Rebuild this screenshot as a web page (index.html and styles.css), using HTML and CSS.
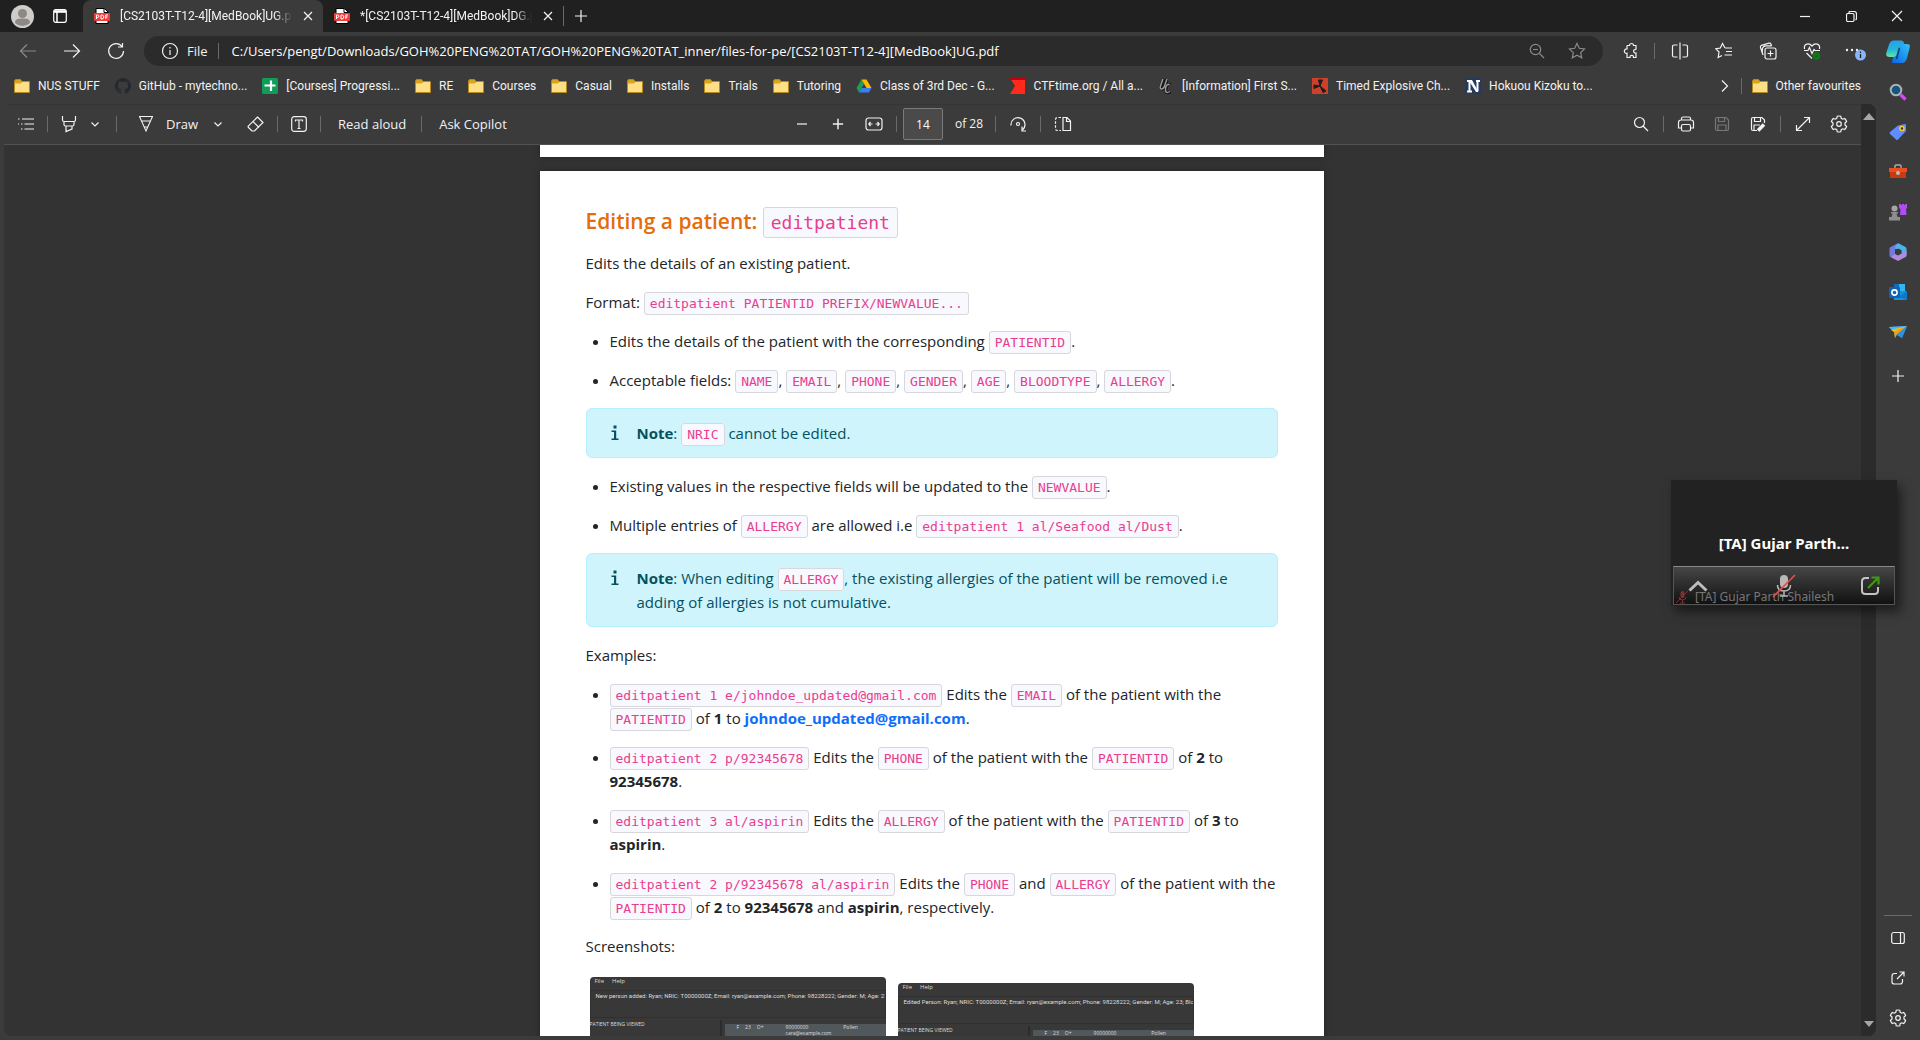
FILE: index.html
```
<!DOCTYPE html>
<html lang="en">
<head>
<meta charset="utf-8">
<title>[CS2103T-T12-4][MedBook]UG.pdf</title>
<link rel="stylesheet" href="styles.css">
</head>
<body>
<svg class="defs" aria-hidden="true">
  <symbol id="folder" viewBox="0 0 16 16"><path d="M.5 3V14.500h15V3.500H8L6.500 1.500H1.500Z" fill="#d9a520" stroke="#b58a1a"/><path d="M1 5.500h5.500L8.500 4h6.500v10H1Z" fill="#ffdf86"/></symbol>
  <symbol id="pdf" viewBox="0 0 16 16"><path d="M2 .5h8.500L14 4v11.500H2Z" fill="#fff" stroke="#000"/><path d="M10 1v3.500h4" fill="none" stroke="#000"/><rect x="0" y="5" width="16" height="8" rx="1" fill="#f23c3c"/><path d="M2.500 11V7h1.200a1.200 1.200 0 0 1 0 2.400H2.500M7 7v4h.8a2 2 0 0 0 0-4ZM11.800 11V7h2.200M11.800 9h1.800" fill="none" stroke="#fff"/></symbol>
  <symbol id="gear" viewBox="0 0 20 20"><path d="M10 2c.8 0 1.500.1 1.800.3l.4 2 1.500.9 2-.7c.9.8 1.500 1.800 1.900 3L16 9v2l1.600 1.500c-.4 1.200-1 2.200-1.900 3l-2-.7-1.500.9-.4 2c-1.200.4-2.400.4-3.600 0l-.4-2-1.500-.9-2 .7c-.9-.8-1.500-1.800-1.900-3L4 11V9L2.400 7.500c.4-1.200 1-2.200 1.900-3l2 .7 1.500-.9.4-2C8.500 2.100 9.200 2 10 2Z"/><circle cx="10" cy="10" r="2.300"/></symbol>
  <symbol id="close" viewBox="0 0 12 12"><path d="m2 2 8 8m0-8-8 8"/></symbol>
  <symbol id="plus" viewBox="0 0 14 14"><path d="M7 1v12M1 7h12"/></symbol>
  <symbol id="chev" viewBox="0 0 10 10"><path d="m1.500 3.500 3.500 3.500 3.500-3.500"/></symbol>
</svg>

<header class="titlebar">
  <button class="profile" aria-label="Profile"><svg width="23" height="23" viewBox="0 0 23 23"><circle cx="11.500" cy="11.500" r="11.500" fill="#d0cdc9"/><circle cx="11.500" cy="8.500" r="4.500" fill="#8c8985"/><path d="M4 18c0-4 3-4.500 7.500-4.500S19 14 19 18a11 11 0 0 1-15 0Z" fill="#8c8985"/></svg></button>
  <button class="tabmenu" aria-label="Tab actions"><svg class="ic" width="14" height="14" viewBox="0 0 14 14"><rect x=".7" y=".7" width="12.600" height="12.600" rx="2"/><path d="M1 3h12M4 3v10" stroke-width="1.500"/><path d="M1 2.200h12" stroke-width="2"/></svg></button>
  <nav class="tabs" aria-label="Tabs">
    <div class="tab active"><svg width="16" height="16"><use href="#pdf"/></svg><a href="#ug">[CS2103T-T12-4][MedBook]UG.pdf</a><button aria-label="Close tab"><svg class="ic" width="12" height="12"><use href="#close"/></svg></button></div>
    <div class="tab"><svg width="16" height="16"><use href="#pdf"/></svg><a href="#dg">*[CS2103T-T12-4][MedBook]DG.pdf</a><button aria-label="Close tab"><svg class="ic" width="12" height="12"><use href="#close"/></svg></button></div>
    <button class="newtab" aria-label="New tab"><svg class="ic" width="14" height="14"><use href="#plus"/></svg></button>
  </nav>
  <div class="wincontrols">
    <button aria-label="Minimise"><svg class="ic" width="10" height="10"><path d="M0 5.500h10"/></svg></button>
    <button aria-label="Restore"><svg class="ic" width="11" height="11" viewBox="0 0 11 11"><rect x=".5" y="2.500" width="7.500" height="8" rx="1.500"/><path d="M3 2V1.500Q3 .5 4 .5h4q2.500 0 2.500 2.500v4.500q0 1-1 1.500"/></svg></button>
    <button aria-label="Close"><svg class="ic" width="12" height="12" viewBox="0 0 12 12"><path d="m1 1 10 10m0-10L1 11"/></svg></button>
  </div>
</header>

<div class="shell">
  <div class="browser">
    <div class="navrow">
      <button class="navbtn dim" aria-label="Back"><svg class="ic" width="18" height="16" viewBox="0 0 18 16"><path d="M17 8H1.500M8 1.500 1.500 8 8 14.500"/></svg></button>
      <button class="navbtn" aria-label="Forward"><svg class="ic" width="18" height="16" viewBox="0 0 18 16"><path d="M1 8h15.500M10 1.500 16.500 8 10 14.500"/></svg></button>
      <button class="navbtn" aria-label="Refresh"><svg class="ic" width="18" height="18" viewBox="0 0 18 18"><path d="M15 4.500A7.400 7.400 0 1 0 16.500 9M15.500 1v4H11"/></svg></button>
      <form class="omnibox">
        <svg class="ic" width="18" height="18" viewBox="0 0 18 18"><circle cx="9" cy="9" r="7.500"/><path d="M9 8v5M9 5v1.500"/></svg>
        <label for="url">File</label><i class="bar"></i>
        <input id="url" type="text" value="C:/Users/pengt/Downloads/GOH%20PENG%20TAT/GOH%20PENG%20TAT_inner/files-for-pe/[CS2103T-T12-4][MedBook]UG.pdf">
        <button type="button" class="navbtn dim" aria-label="Zoom"><svg class="ic" width="18" height="18" viewBox="0 0 18 18"><circle cx="7.500" cy="7.500" r="5.200"/><path d="m11.500 11.500 4.500 4.500M5 7.500h5"/></svg></button>
        <button type="button" class="navbtn dim" aria-label="Add to favourites"><svg class="ic" width="18" height="18" viewBox="0 0 18 18"><path d="m9 1.500 2.300 4.800 5.200.7-3.800 3.600 1 5.300L9 13.300l-4.700 2.600 1-5.300L1.500 7l5.200-.7Z"/></svg></button>
      </form>
      <button class="navbtn" aria-label="Extensions"><svg class="ic" width="18" height="18" viewBox="0 0 18 18"><path d="M5 3.500h2.500a2 2 0 1 1 4 0H14v4.200M5 3.500V7a2.200 2.200 0 1 0 0 4.300v4.200h3a1.800 1.800 0 1 1 3.500 0H14V11a1.800 1.800 0 1 1 0-3.400"/></svg></button>
      <i class="bar"></i>
      <button class="navbtn" aria-label="Split screen"><svg class="ic" width="18" height="18" viewBox="0 0 18 18"><path d="M9 .5v17M6.500 3H3.200Q1.500 3 1.500 4.500v9Q1.500 15 3.200 15h3.300M11.500 3h3.300q1.700 0 1.700 1.500v9q0 1.500-1.700 1.500h-3.300"/></svg></button>
      <button class="navbtn" aria-label="Favourites"><svg class="ic" width="18" height="18" viewBox="0 0 18 18"><path d="M10 6 7.500 1.500 5.300 6 .8 6.800 4 10l-.8 5.500 3.800-2M10 6h7M11 9.500h6M9.500 13H17"/></svg></button>
      <button class="navbtn" aria-label="Collections"><svg class="ic" width="18" height="18" viewBox="0 0 18 18"><rect x="6" y="6" width="11" height="11" rx="2"/><path d="M11.500 8.500v6M8.500 11.500h6M4 13 1.500 5.500Q1 4 2.500 3.300L10 1.200q1.500-.4 2 1l.6 2M4 13Q2.800 10 3.500 6.500 4 4 6.500 3.800h6"/></svg></button>
      <button class="navbtn" aria-label="Browser essentials"><svg class="ic" width="18" height="18" viewBox="0 0 18 18"><path d="M1.500 7C.5 1.500 6 .5 9 4c3-3.500 8.500-2.500 7.500 3M1 8.500h4l1.500-3 2.500 6 2-4 1 1h5M3.500 11 9 16.500"/><circle cx="13.500" cy="14" r="3.800" fill="#107c10" stroke="none"/><path d="m12 14 1 1 2-2.200" stroke="#063"/></svg></button>
      <button class="navbtn more" aria-label="Settings and more"><svg width="26" height="20" viewBox="0 0 26 20"><g fill="#f0f0f0"><circle cx="5" cy="9" r="1.200"/><circle cx="10" cy="9" r="1.200"/><circle cx="15" cy="9" r="1.200"/></g><circle cx="18.500" cy="14" r="5.500" fill="#8ab4f8"/><path d="M18.500 13v4M18.500 10.500v1.500" stroke="#222" stroke-width="1.300"/></svg></button>
    </div>

    <nav class="bookmarks" aria-label="Favourites">
      <a href="#b1"><svg width="16" height="16"><use href="#folder"/></svg>NUS STUFF</a>
      <a href="#b2"><svg width="16" height="16" viewBox="0 0 16 16"><path fill="#24292f" d="M8 0a8 8 0 0 0-2.500 15.600c.4 0 .5-.2.500-.4v-1.500c-2.200.5-2.700-1-2.700-1-.4-.9-.9-1.100-.9-1.100-.7-.5 0-.5 0-.5.800 0 1.300.8 1.300.8.700 1.300 1.900.9 2.300.7 0-.5.300-.9.500-1.100C4.700 11.300 2.900 10.600 2.900 7.600c0-.9.300-1.600.8-2.100 0-.3-.3-1.100.1-2.200 0 0 .7-.2 2.200.8a7.500 7.500 0 0 1 4 0c1.500-1 2.200-.8 2.200-.8.400 1.100.1 1.900.1 2.200.5.500.8 1.200.8 2.100 0 3-1.900 3.700-3.700 3.900.3.300.6.800.6 1.500v2.200c0 .2.100.5.500.4A8 8 0 0 0 8 0Z"/></svg>GitHub - mytechno...</a>
      <a href="#b3"><svg width="16" height="16" viewBox="0 0 16 16"><rect width="16" height="16" rx="1.500" fill="#0f9d58"/><path d="M9 2.500V13M2.500 7.500h11" stroke="#fff" stroke-width="2.200"/></svg>[Courses] Progressi...</a>
      <a href="#b4"><svg width="16" height="16"><use href="#folder"/></svg>RE</a>
      <a href="#b5"><svg width="16" height="16"><use href="#folder"/></svg>Courses</a>
      <a href="#b6"><svg width="16" height="16"><use href="#folder"/></svg>Casual</a>
      <a href="#b7"><svg width="16" height="16"><use href="#folder"/></svg>Installs</a>
      <a href="#b8"><svg width="16" height="16"><use href="#folder"/></svg>Trials</a>
      <a href="#b9"><svg width="16" height="16"><use href="#folder"/></svg>Tutoring</a>
      <a href="#b10"><svg width="16" height="16" viewBox="0 0 16 16"><path fill="#1e9e56" d="M5.500 1.500 8 6 3 14.500.5 10Z"/><path fill="#ffba00" d="M5.500 1.500h5L15.500 10h-5Z"/><path fill="#3c7df0" d="M5.500 10h10L13 14.500H3Z"/></svg>Class of 3rd Dec - G...</a>
      <a href="#b11"><svg width="16" height="16" viewBox="0 0 16 16"><path fill="#ff2a1c" d="M0 0h15v16H0l5-8Z"/><path fill="#c00010" d="M0 0h15v2H1Z"/></svg>CTFtime.org / All a...</a>
      <a href="#b12"><svg width="16" height="16" viewBox="0 0 16 16" fill="none"><path d="m6 1-3 7q-1 3 1 3t3-3l2-7M12 7q-1-1.500-2.500 0T8 12t1.500 3 3-1M6 6l-1 6" stroke="#111" stroke-width="3"/><path d="m5 1-2.500 7q-1 3 1 3t3-3L9 1M11.500 7q-1-1.500-2.500 0t-1.500 4.500T9 14.500t3-1" stroke="#999" stroke-width="1.500"/></svg>[Information] First S...</a>
      <a href="#b13"><svg width="16" height="16" viewBox="0 0 16 16"><path fill="#cd412b" d="M0 0h16v16H0Z"/><path d="M8 8 6.500 2h4L8 8l6 5-3 1.500-3-6.500-6 2.500V7Z" fill="#1e1e1e" stroke="#1e1e1e"/></svg>Timed Explosive Ch...</a>
      <a href="#b14"><svg width="16" height="16" viewBox="0 0 16 16"><path fill="#253a5e" d="M0 0h16v16H0Z"/><path d="M2 3h4M11 3h4M2 13.500h5M4.500 3v10M12.500 3v10" fill="none" stroke="#fff" stroke-width="2"/><path d="M3.500 2H7l6.500 12H11Z" fill="#fff"/></svg>Hokuou Kizoku to...</a>
      <button class="navbtn overflow" aria-label="More favourites"><svg class="ic" width="8" height="12" viewBox="0 0 8 12"><path d="m1 .5 5.500 5.500L1 11.500"/></svg></button>
      <i class="bar"></i>
      <a href="#other" class="other"><svg width="16" height="16"><use href="#folder"/></svg>Other favourites</a>
    </nav>

    <section class="viewer">
      <div class="viewcol">
        <div class="toolbar">
          <div class="tools left">
            <button aria-label="Contents"><svg class="ic" width="18" height="16" viewBox="0 0 18 16"><path d="M5 3h12M7.500 8H17M7.500 13H17M1 3h1.500M4 8h1.500M4 13h1.500M1 8h1"/></svg></button><i class="bar"></i>
            <button aria-label="Highlight"><svg class="ic" width="16" height="18" viewBox="0 0 16 18"><path d="M1.500 1v4q0 1.500 1.500 1.500h10q1.500 0 1.500-1.500V1M3 6.500v3q0 1.500 1.500 1.500h7q1.500 0 1.500-1.500v-3M5 11v5.500l6-2.500v-3"/></svg></button>
            <button class="drop" aria-label="Highlight colours"><svg class="ic" width="10" height="10"><use href="#chev"/></svg></button><i class="bar"></i>
            <button class="draw"><svg class="ic" width="16" height="18" viewBox="0 0 16 18"><path d="M1 1.500h14M1.500 1.500 8 16l6.500-14.500M6 12h4M4 6h8" stroke-width="1.100"/></svg>Draw</button>
            <button class="drop wide" aria-label="Draw options"><svg class="ic" width="10" height="10"><use href="#chev"/></svg></button>
            <button aria-label="Erase"><svg class="ic" width="18" height="18" viewBox="0 0 18 18"><path d="M10.500 2 16 7.500 7.500 16H5l-3.500-3.500q-.8-.8 0-1.600ZM6 6.500l6 6"/></svg></button><i class="bar"></i>
            <button aria-label="Add text"><svg class="ic" width="16" height="16" viewBox="0 0 16 16"><rect x=".7" y=".7" width="14.600" height="14.600" rx="2.500"/><path d="M4.500 5.500V4h7v1.500M8 4v8.500M6.500 12.500h3"/></svg></button><i class="bar"></i>
            <button class="text">Read aloud</button><i class="bar"></i>
            <button class="text">Ask Copilot</button>
          </div>
          <div class="tools">
            <button aria-label="Zoom out"><svg class="ic" width="12" height="12"><path d="M1 6h10" stroke="#aaa" stroke-width="2"/></svg></button>
            <button aria-label="Zoom in"><svg class="ic" width="12" height="12" viewBox="0 0 14 14"><path d="M7 1v12M1 7h12" stroke-width="1.700"/></svg></button>
            <button aria-label="Fit to width"><svg class="ic" width="18" height="14" viewBox="0 0 18 14"><rect x="1" y="1" width="16" height="12" rx="2.500"/><path d="M4 7h3.500M5.500 5 3.800 7l1.700 2M14 7h-3.500M12.500 5l1.700 2-1.700 2"/></svg></button><i class="bar"></i>
            <input id="page" type="text" value="14" aria-label="Page"><label for="page">of 28</label><i class="bar"></i>
            <button aria-label="Rotate"><svg class="ic" width="18" height="18" viewBox="0 0 18 18"><path d="M2 10.500A7 7 0 1 1 13.500 15M13 11.500V16h4"/><circle cx="9" cy="9" r="1.500"/></svg></button><i class="bar"></i>
            <button aria-label="Page view"><svg class="ic" width="18" height="16" viewBox="0 0 18 16"><path d="M9 1.500h4L16.500 5v9.500H9ZM12.500 1.500v4h4"/><path d="M7 1.500H3.500q-2 0-2 2v9q0 2 2 2H7" stroke-dasharray="2.500 1.500"/></svg></button>
          </div>
          <div class="tools right">
            <button aria-label="Find"><svg class="ic" width="16" height="16" viewBox="0 0 16 16"><circle cx="6.500" cy="6.500" r="5"/><path d="m10 10 5 5"/></svg></button><i class="bar"></i>
            <button aria-label="Print"><svg class="ic" width="18" height="16" viewBox="0 0 18 16"><path d="M4.500 4V2.500q0-1.500 1.500-1.500h6q1.500 0 1.500 1.500V4M4.500 12H1.500V6.500q0-2.500 2.500-2.500h10q2.500 0 2.500 2.500V12h-3"/><rect x="4.500" y="8.500" width="9" height="6.500" rx="1.500"/></svg></button>
            <button class="off" aria-label="Save"><svg class="ic" width="16" height="16" viewBox="0 0 16 16"><path d="M1.500 3q0-1.500 1.500-1.500h9L14.500 4v9q0 1.500-1.500 1.500H3Q1.500 14.500 1.500 13ZM4.500 1.500v4h6v-4M4 14.500V9h8v5.500"/></svg></button>
            <button aria-label="Save as"><svg class="ic" width="16" height="16" viewBox="0 0 16 16"><path d="M7 14.500H3Q1.500 14.500 1.500 13V3q0-1.500 1.500-1.500h9L14.500 4v3M4.500 1.500v4h6v-4M4 14.500V9h6"/><path d="m8 14.500 6-6" stroke-width="3.500"/></svg></button><i class="bar"></i>
            <button aria-label="Full screen"><svg class="ic" width="16" height="16" viewBox="0 0 16 16"><path d="m1.500 14.500 13-13M9 1.500h5.500V7M7 14.500H1.500V9"/></svg></button>
            <button aria-label="Settings"><svg class="ic" width="20" height="20"><use href="#gear"/></svg></button>
          </div>
        </div>
        <main class="pages">
          <div class="sheet previous"></div>
          <article class="sheet">
            <h2>Editing a patient: <code>editpatient</code></h2>
            <p>Edits the details of an existing patient.</p>
            <p>Format: <code>editpatient PATIENTID PREFIX/NEWVALUE...</code></p>
            <ul>
              <li>Edits the details of the patient with the corresponding <code>PATIENTID</code>.</li>
              <li>Acceptable fields: <code>NAME</code>, <code>EMAIL</code>, <code>PHONE</code>, <code>GENDER</code>, <code>AGE</code>, <code>BLOODTYPE</code>, <code>ALLERGY</code>.</li>
            </ul>
            <div class="note"><svg width="8" height="16" viewBox="0 0 8 16"><path d="M2.500.5h3v3h-3ZM.5 5.500h4.700V13.500H7.500v1.500H.5v-1.500H3V7H.5Z" fill="#055160"/></svg><div><strong>Note</strong>: <code>NRIC</code> cannot be edited.</div></div>
            <ul>
              <li>Existing values in the respective fields will be updated to the <code>NEWVALUE</code>.</li>
              <li>Multiple entries of <code>ALLERGY</code> are allowed i.e <code>editpatient 1 al/Seafood al/Dust</code>.</li>
            </ul>
            <div class="note"><svg width="8" height="16" viewBox="0 0 8 16"><path d="M2.500.5h3v3h-3ZM.5 5.500h4.700V13.500H7.500v1.500H.5v-1.500H3V7H.5Z" fill="#055160"/></svg><div><strong>Note</strong>: When editing <code>ALLERGY</code>, the existing allergies of the patient will be removed i.e adding of allergies is not cumulative.</div></div>
            <p>Examples:</p>
            <ul>
              <li><code>editpatient 1 e/johndoe_updated@gmail.com</code> Edits the <code>EMAIL</code> of the patient with the <br><code>PATIENTID</code> of <strong>1</strong> to <a href="mailto:johndoe_updated@gmail.com">johndoe_updated@gmail.com</a>.</li>
              <li><code>editpatient 2 p/92345678</code> Edits the <code>PHONE</code> of the patient with the <code>PATIENTID</code> of <strong>2</strong> to <br><strong>92345678</strong>.</li>
              <li><code>editpatient 3 al/aspirin</code> Edits the <code>ALLERGY</code> of the patient with the <code>PATIENTID</code> of <strong>3</strong> to <br><strong>aspirin</strong>.</li>
              <li><code>editpatient 2 p/92345678 al/aspirin</code> Edits the <code>PHONE</code> and <code>ALLERGY</code> of the patient with the <code>PATIENTID</code> of <strong>2</strong> to <strong>92345678</strong> and <strong>aspirin</strong>, respectively.</li>
            </ul>
            <p>Screenshots:</p>
            <div class="shots">
              <figure class="shot tall">
                <div class="menu"><span>File</span><span>Help</span></div>
                <div class="result">New person added: Ryan; NRIC: T0000000Z; Email: ryan@example.com; Phone: 98228222; Gender: M; Age: 22; Blo</div>
                <div class="panes"><div class="viewed">PATIENT BEING VIEWED</div><div class="list"><div class="row"><span>F</span><span>23</span><span>O+</span><span class="contact">90000000<br>cara@example.com</span><span>Pollen</span></div></div></div>
              </figure>
              <figure class="shot">
                <div class="menu"><span>File</span><span>Help</span></div>
                <div class="result">Edited Person: Ryan; NRIC: T0000000Z; Email: ryan@example.com; Phone: 98228222; Gender: M; Age: 23; BloodType:</div>
                <div class="panes"><div class="viewed">PATIENT BEING VIEWED</div><div class="list"><div class="row"><span>F</span><span>23</span><span>O+</span><span class="contact">90000000<br>cara@example.com</span><span>Pollen</span></div></div></div>
              </figure>
            </div>
          </article>
        </main>
      </div>
      <div class="scroll"><svg width="12" height="7"><path d="M0 7 6 0l6 7Z" fill="#a6a6a6"/></svg><svg width="10" height="6"><path d="M0 0h10L5 6Z" fill="#a6a6a6"/></svg></div>
    </section>
  </div>

  <aside class="sidebar">
    <button class="copilot" aria-label="Copilot"><svg width="24" height="24" viewBox="0 0 24 24"><defs><linearGradient id="g1" x1="0" y1="0" x2="0" y2="1"><stop offset="0" stop-color="#2a9fe8"/><stop offset=".55" stop-color="#22b8d8"/><stop offset="1" stop-color="#6be39c"/></linearGradient><linearGradient id="g2" x1="1" y1="0" x2="0" y2="1"><stop offset="0" stop-color="#33c5f3"/><stop offset="1" stop-color="#0a62e8"/></linearGradient></defs><path d="M7 23q-1.500 0-1-2l4-13q1-4 4-4h7q3.500 0 2.700 3.500L21 18q-1.500 5-5 5Z" fill="url(#g2)"/><path d="M3.500 17Q-.5 17 .3 13L3 4.500Q4.500.5 8 .5h7.500q2 0 2.500 2.500l.5 2h-3q-2.500 0-3.500 4l-1.500 5.500Q9.500 17 7 17Z" fill="url(#g1)"/><path d="m13.500 8-3 11" stroke="#123b7a" stroke-width="1.500"/></svg></button>
    <button aria-label="Search"><svg width="18" height="18" viewBox="0 0 18 18"><path d="m11.500 11.500 5 5" stroke="#d24bf0" stroke-width="3.200"/><circle cx="7" cy="7" r="5.300" fill="#17557c" stroke="#a9b3ba" stroke-width="2"/></svg></button>
    <button aria-label="Shopping"><svg width="18" height="18" viewBox="0 0 18 18"><path d="M9 2.500 16 1q1 0 1 1v6l-8 8.500q-1 1-2 0L1 11q-1-1 0-2Z" fill="#5f8dff"/><circle cx="13" cy="5.500" r="2" fill="#333" stroke="#ffc928" stroke-width="1.500"/></svg></button>
    <button aria-label="Tools"><svg width="18" height="18" viewBox="0 0 18 18"><path d="M6 5V3q0-1 1-1h4q1 0 1 1v2" fill="none" stroke="#aaa" stroke-width="1.400"/><path d="M0 5h18v4H0Z" fill="#e8511f"/><path d="M1 9h16v6H1Z" fill="#c93a12"/><circle cx="9" cy="10" r="2" fill="#bbb"/></svg></button>
    <button aria-label="Games"><svg width="18" height="18" viewBox="0 0 18 18"><path d="M10 1h2v1h1V1h2v1h1V1h2v4l-1 1 .5 6H11l.5-6L10 5Z" fill="#b14bf4"/><circle cx="5.500" cy="5.500" r="3" fill="#a5a5a5"/><path d="M2 9h7v1.500H7.500L8.500 14H11v3.500H0V14h2.500l1-3.500H2Z" fill="#8e8e8e"/></svg></button>
    <button aria-label="Microsoft 365"><svg width="18" height="18" viewBox="0 0 18 18"><path d="M8.500.5 1.500 4q-1 .5-1 1.500v7q0 1 1 1.500L6 16.500 6 6l6-4Z" fill="#7479dc"/><path d="M8.500.5q.7-.3 1.400 0L16.500 4q1 .5 1 1.500v7l-5-3V7L6 6V4Z" fill="#4bb4ea"/><path d="M2 14 6 11l3 1.500 8.500-5v5q0 1-1 1.500l-6.500 3.500q-1 .5-2 0Z" fill="#b28be0"/><path d="M6.500 7 9 5.500 12 7v3.500L9 12l-2.500-1.500Z" fill="#3b3b3b"/></svg></button>
    <button aria-label="Outlook"><svg width="18" height="18" viewBox="0 0 18 18"><path d="M5 1h11v8H5Z" fill="#35b5f0"/><path d="M5 1h5v8H5Z" fill="#0f6cbd"/><path d="M4 8h14v9H5Z" fill="#1790e0"/><path d="m18 8-8 6 8 3Z" fill="#0f78c8"/><rect x="0" y="4" width="11" height="11" rx="1" fill="#0f62b5"/><circle cx="5.500" cy="9.500" r="2.600" fill="none" stroke="#fff" stroke-width="1.600"/></svg></button>
    <button aria-label="Drop"><svg width="18" height="18" viewBox="0 0 18 18"><path d="m0 4 18-1-5 12-5-3-2 3-1-6Z" fill="#2f9be8"/><path d="m0 4 18-1L5 9Z" fill="#48b9f2"/><path d="m2 7 16-4L5 9Z" fill="#ffb51e"/><path d="m5 9 13-6L7.500 11.500 6 15Z" fill="#f2a10c"/><path d="m18 3-10 8.500 5 3.500Z" fill="#2f8fe0"/></svg></button>
    <button class="add" aria-label="Customise"><svg class="ic" width="14" height="14"><use href="#plus"/></svg></button>
    <div class="foot">
      <button aria-label="Hide sidebar"><svg class="ic" width="14" height="14" viewBox="0 0 14 14"><rect x=".7" y="1.500" width="12.600" height="11" rx="2"/><path d="M9.500 2v10"/></svg></button>
      <button aria-label="Open link"><svg class="ic" width="14" height="14" viewBox="0 0 14 14"><path d="M6 2.500H3.500q-2.500 0-2.500 2.500V11q0 2 2.500 2H9q2.500 0 2.500-2.500V8M8.500 1H13v4.500M13 1 6 8"/></svg></button>
      <button aria-label="Settings"><svg class="ic" width="20" height="20"><use href="#gear"/></svg></button>
    </div>
  </aside>
</div>

<section class="call" aria-label="Meeting">
  <div class="name">[TA] Gujar Parth...</div>
  <div class="controls">
    <div class="caption"><svg width="12" height="14" viewBox="0 0 12 14"><rect x="4.500" y="1" width="4" height="7" rx="2" fill="#7d3131"/><path d="M3 7q0 3 3.500 3T10 7M6.500 10v3M4 13h5M0 13 12 1" fill="none" stroke="#7d3131"/></svg>[TA] Gujar Parth Shailesh</div>
    <button aria-label="Expand"><svg width="20" height="12" viewBox="0 0 20 12"><path d="m1.500 10.500 8.500-8 8.500 8" fill="none" stroke="#bdbdbd" stroke-width="3"/></svg></button>
    <button aria-label="Unmute"><svg width="24" height="24" viewBox="0 0 24 24"><rect x="8" y="1" width="8" height="13" rx="4" fill="#b8b8b8"/><path d="M5.500 11q0 6 6.500 6t6.500-6M12 17v4.500M8 22h8" fill="none" stroke="#b8b8b8" stroke-width="1.500"/><path d="M1 23 23 1" stroke="#e04e4e" stroke-width="1.700"/></svg></button>
    <button aria-label="Open meeting window"><svg width="20" height="20" viewBox="0 0 20 20"><path d="M9 2H5.500Q2 2 2 5.500v9Q2 18 5.500 18h9q3.500 0 3.500-3.500V11" fill="none" stroke="#c4c4c4" stroke-width="2"/><path d="M8 12 18 2M11.500 1.500h7v7" fill="none" stroke="#3f9a12" stroke-width="2.200"/></svg></button>
  </div>
</section>
</body>
</html>
```
FILE: styles.css
```
* { box-sizing: border-box; }
html, body { height: 100%; margin: 0; }
body {
  display: flex;
  flex-direction: column;
  overflow: hidden;
  position: relative;
  background: #3b3b3b;
  color: #f2f2f2;
  font: 12px/16px Roboto, "Open Sans", sans-serif;
}
button {
  display: flex;
  align-items: center;
  justify-content: center;
  flex: none;
  margin: 0;
  padding: 0;
  border: 0;
  background: none;
  color: inherit;
  font: inherit;
}
a { color: inherit; text-decoration: none; }
svg { flex: none; display: block; }
.defs { position: absolute; width: 0; height: 0; }
.ic { fill: none; stroke: currentColor; stroke-width: 1.2; }
.bar { flex: none; width: 1px; height: 16px; background: #6a6a6a; }

/* title bar */
.titlebar { display: flex; flex: none; height: 32px; background: #202020; }
.profile { width: 44px; }
.tabmenu { width: 32px; margin-right: 7px; color: #fff; }
.tabs { display: flex; flex: 1; min-width: 0; }
.tab { display: flex; align-items: center; flex: 0 1 240px; gap: 10px; padding: 0 9px 0 11px; min-width: 0; }
.tab.active { background: #3b3b3b; border-radius: 8px 8px 0 0; }
.tab a { flex: 1; overflow: hidden; white-space: nowrap; -webkit-mask-image: linear-gradient(90deg, #000 90%, transparent); mask-image: linear-gradient(90deg, #000 90%, transparent); }
.newtab { width: 34px; height: 20px; margin-top: 6px; border-left: 1px solid #6a6a6a; }
.wincontrols { display: flex; }
.wincontrols button { width: 46px; }

/* browser frame */
.shell { display: flex; flex: 1; min-height: 0; }
.browser { display: flex; flex: 1; flex-direction: column; min-width: 0; padding: 0 0 4px 4px; }
.navrow { display: flex; align-items: center; flex: none; height: 38px; padding-left: 2px; }
.navbtn { width: 44px; height: 30px; }
.dim { color: #8a8a8a; }
.omnibox { display: flex; align-items: center; flex: 1; height: 30px; margin: 0 6px; padding: 0 6px 0 17px; border-radius: 15px; background: #2b2b2b; font: 13px/20px "Open Sans", sans-serif; }
.omnibox label { margin: 0 10px 0 8px; }
.omnibox input { flex: 1; min-width: 0; margin-left: 13px; padding: 0; border: 0; background: none; color: #fff; font: inherit; }
.omnibox .navbtn { width: 40px; }
.navrow > .bar { margin: 0 3px 0 1px; }
.navrow .more { width: 42px; }

.bookmarks { display: flex; align-items: center; flex: none; height: 34px; padding: 0 15px 2px 10px; gap: 15px; white-space: nowrap; }
.bookmarks a { display: flex; align-items: center; gap: 8px; }
.overflow { width: 20px; margin-left: auto; }
.bookmarks > .bar { margin: 0 -5px 0 -9px; }

/* document viewer */
.viewer { display: flex; flex: 1; min-height: 0; overflow: hidden; border-radius: 8px; background: #333; }
.viewcol { display: flex; flex: 1; flex-direction: column; min-width: 0; }
.toolbar { display: grid; grid-template-columns: 1fr auto 1fr; flex: none; height: 41px; border-bottom: 1px solid #525252; background: #3b3b3b; box-shadow: inset 0 1px #353535; font: 13px/20px "Open Sans", sans-serif; }
.tools { display: flex; align-items: center; gap: 4px; }
.tools button { width: 32px; height: 32px; }
.tools .bar { margin: 0 2px; }
.tools.left { gap: 0; padding-left: 6px; }
.tools.left .bar { margin: 0 5px; }
.tools.right { justify-content: flex-end; padding-right: 6px; }
.tools button.drop { width: 20px; margin-right: 6px; }
.tools button.wide { margin: 0 12px 0 10px; }
.tools button.draw { width: auto; gap: 12px; padding-left: 16px; }
.tools button.text { width: auto; padding: 0 10px 0 12px; }
.tools input { width: 40px; height: 32px; padding: 0; border: 1px solid #7a7a7a; border-radius: 2px; background: #4a4a4a; color: #fff; font: 12px/20px "Open Sans", sans-serif; text-align: center; }
.tools label { margin: 0 6px 0 8px; font-size: 12px; }
.off { color: #787878; }
.scroll { display: flex; flex: none; flex-direction: column; align-items: center; justify-content: space-between; width: 15px; padding: 9px 0; background: #2b2b2b; }

.pages { display: flex; flex: 1; flex-direction: column; align-items: center; gap: 14px; min-height: 0; padding-right: 2px; overflow: hidden; }
.sheet { flex: none; width: 784px; padding: 36px 46px; background: #fff; color: #212529; box-shadow: 0 0 6px #222; font: 15px/24px "Open Sans", "Noto Sans", sans-serif; }
.previous { height: 12px; padding: 0; }
h2 { margin: 0 0 16px; color: #e46c0a; font-size: 21px; font-weight: 600; line-height: 28px; }
p, li { margin: 0 0 15px; }
ul { margin: 0; padding-left: 24px; }
code { padding: 3px 5px; border: 1px solid #d8d8dc; border-radius: 3px; background: #f8f8ff; color: #e83e8c; font: 13px/16px "DejaVu Sans Mono", "Liberation Mono", monospace; }
h2 code { padding: 4px 7px; font-size: 18px; }
li a { color: #0d6efd; font-weight: 700; }
.note { display: flex; align-items: flex-start; gap: 18px; margin: 16px 0; padding: 12px 24px; border: 1px solid #b6effb; border-radius: 6px; background: #cff4fc; color: #055160; }
.note svg { margin-top: 4px; }

/* application screenshots embedded in the document */
.shots { display: flex; align-items: flex-end; gap: 12px; padding: 4px 4px 0; }
.shot { width: 296px; height: 394px; margin: 0; overflow: hidden; border-radius: 4px 4px 0 0; background: #383838; color: #ddd; font: 5px/8px "Open Sans", sans-serif; white-space: nowrap; }
.shot.tall { height: 400px; }
.menu { display: flex; gap: 8px; padding-left: 5px; font-size: 6px; }
.result { height: 28px; margin-top: 5px; padding: 1px 0 0 5px; overflow: hidden; border: 1px solid #303030; font: 6px/8px Roboto, sans-serif; }
.panes { display: flex; margin-top: 2px; }
.viewed { width: 132px; border-right: 2px solid #2c2c2c; }
.list { flex: 1; padding: 4px 0 0 3px; }
.row { display: flex; gap: 6px; height: 60px; padding-left: 12px; background: #50585c; line-height: 6px; }
.contact { margin: 0 6px 0 16px; }

/* sidebar */
.sidebar { display: flex; flex: none; flex-direction: column; align-items: center; width: 44px; padding-bottom: 2px; }
.sidebar button { width: 40px; height: 40px; }
.sidebar .add { margin-top: 4px; }
.foot { margin-top: auto; border-top: 1px solid #6a6a6a; padding-top: 2px; }
.sidebar .foot button { width: 28px; }

/* floating meeting window */
.call { position: absolute; top: 480px; right: 23px; width: 226px; padding: 53px 2px 1px; background: #222; box-shadow: 4px 6px 10px rgba(0, 0, 0, .5); font: 12px/16px "Noto Sans", sans-serif; }
.name { height: 33px; font-size: 15px; font-weight: 700; line-height: 20px; text-align: center; color: #fff; }
.controls { display: flex; align-items: center; justify-content: space-between; position: relative; height: 39px; padding: 0 14px; border: 1px solid #555; border-top-color: #888; background: linear-gradient(#464646, #111); }
.caption { display: flex; align-items: center; gap: 7px; position: absolute; left: 2px; bottom: -1px; color: #777; white-space: nowrap; }
.controls button { position: relative; }
```
